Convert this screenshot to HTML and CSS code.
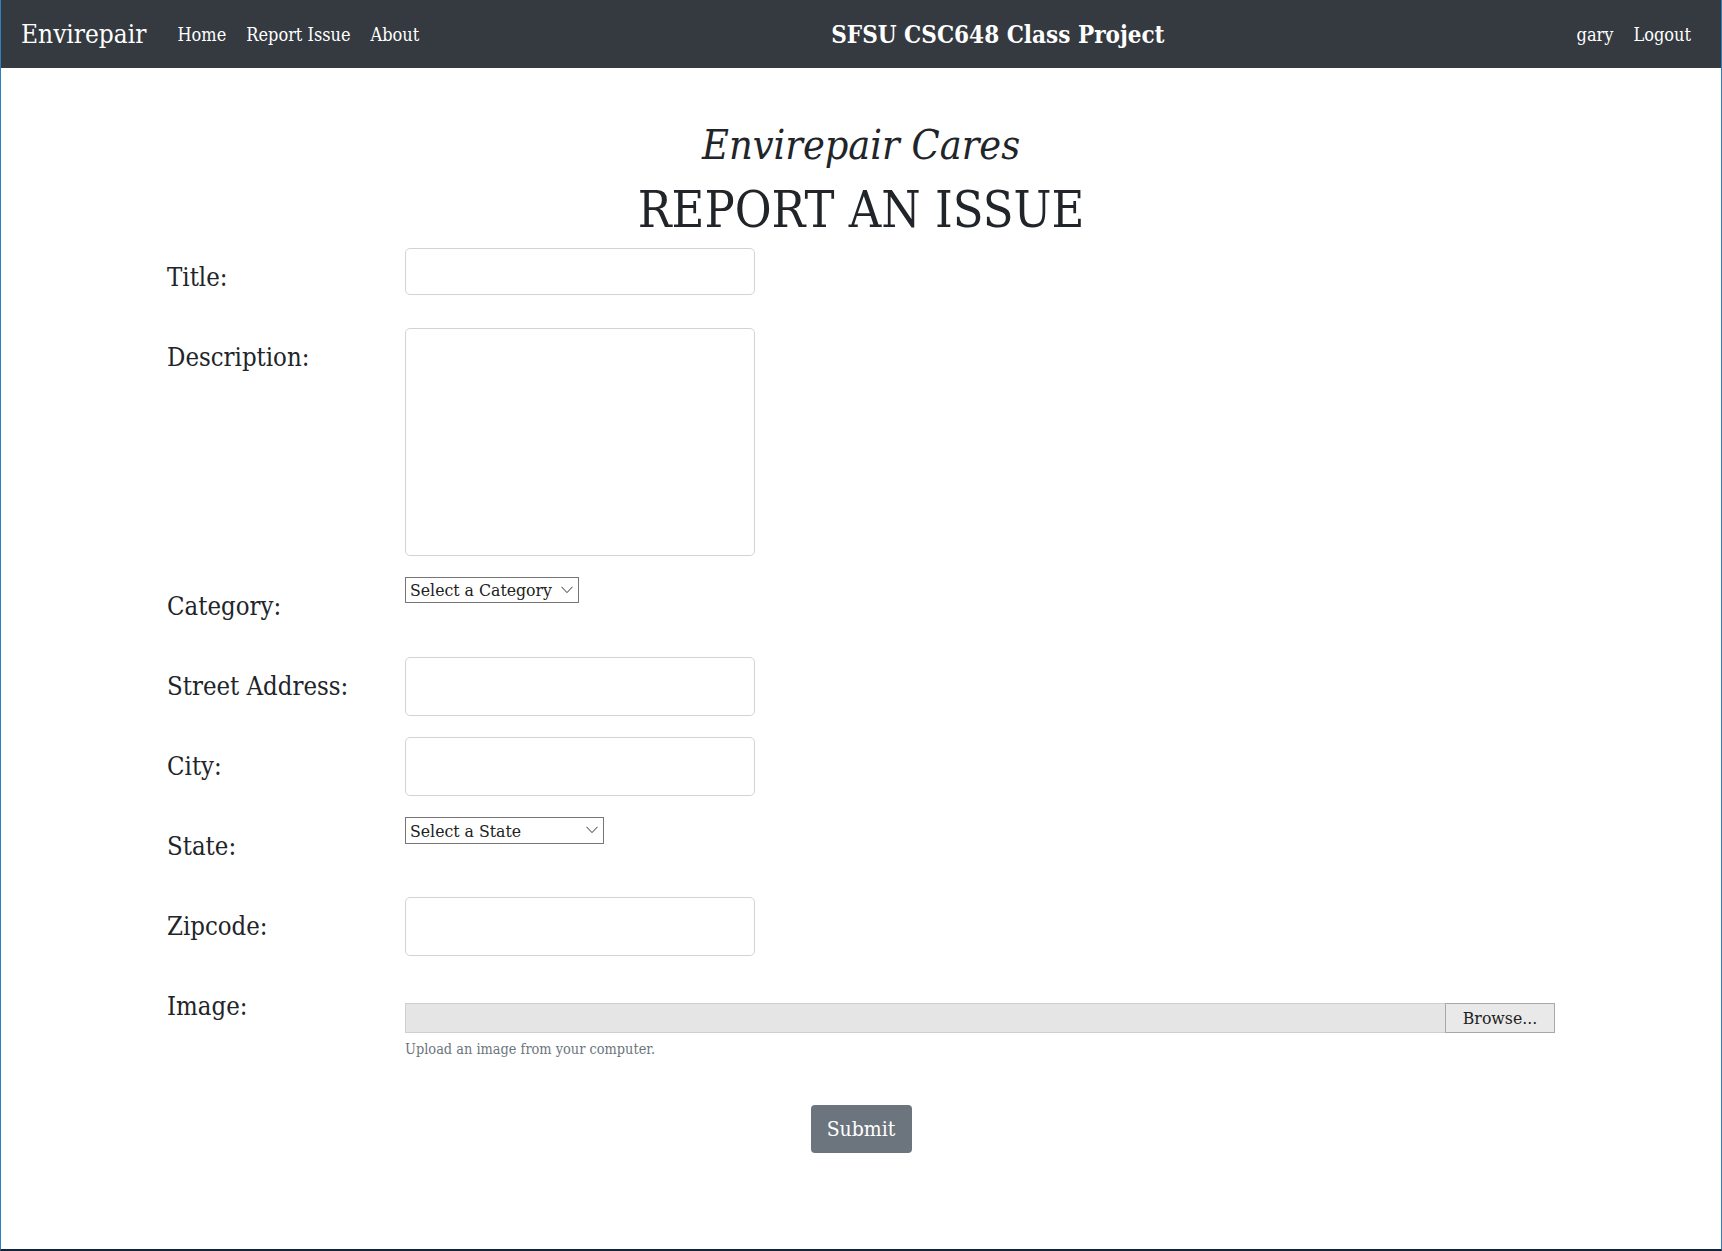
FILE: index.html
```html
<!DOCTYPE html>
<html lang="en">
<head>
<meta charset="utf-8">
<title>Envirepair - Report Issue</title>
<link rel="stylesheet" href="styles.css">
</head>
<body>
<nav class="navbar">
  <div class="nav-left">
    <a class="brand" href="#">Envirepair</a>
    <a class="nav-link" href="#">Home</a>
    <a class="nav-link" href="#">Report Issue</a>
    <a class="nav-link" href="#">About</a>
  </div>
  <div class="nav-title">SFSU CSC648 Class Project</div>
  <div class="nav-right">
    <a class="nav-link" href="#">gary</a>
    <a class="nav-link" href="#">Logout</a>
  </div>
</nav>

<main class="main">
  <h2 class="tagline">Envirepair Cares</h2>
  <h1 class="page-title">REPORT AN ISSUE</h1>

  <form class="report-form">
    <label class="field-label" for="title">Title:</label>
    <div class="field"><input id="title" class="input input-short" type="text"></div>

    <label class="field-label" for="desc">Description:</label>
    <div class="field"><textarea id="desc" class="input textarea"></textarea></div>

    <label class="field-label" for="cat">Category:</label>
    <div class="field">
      <span class="select-wrap select-cat">
        <select id="cat" class="select"><option>Select a Category</option></select>
        <svg class="chev" width="12" height="8" viewBox="0 0 12 8"><path d="M0.5 0.8 L6 6.6 L11.5 0.8" fill="none" stroke="#333" stroke-width="1"/></svg>
      </span>
    </div>

    <label class="field-label" for="street">Street Address:</label>
    <div class="field"><input id="street" class="input" type="text"></div>

    <label class="field-label" for="city">City:</label>
    <div class="field"><input id="city" class="input" type="text"></div>

    <label class="field-label" for="state">State:</label>
    <div class="field">
      <span class="select-wrap select-state">
        <select id="state" class="select"><option>Select a State</option></select>
        <svg class="chev" width="12" height="8" viewBox="0 0 12 8"><path d="M0.5 0.8 L6 6.6 L11.5 0.8" fill="none" stroke="#333" stroke-width="1"/></svg>
      </span>
    </div>

    <label class="field-label" for="zip">Zipcode:</label>
    <div class="field"><input id="zip" class="input" type="text"></div>

    <label class="field-label">Image:</label>
    <div class="field field-image">
      <div class="file-input">
        <div class="file-bar"></div>
        <div class="file-btn">Browse...</div>
      </div>
      <small class="help">Upload an image from your computer.</small>
    </div>

    <div class="submit-row">
      <button type="button" class="btn-submit">Submit</button>
    </div>
  </form>
</main>
</body>
</html>
```

FILE: styles.css
```css
html {
  min-height: 100vh;
  box-sizing: border-box;
  border-left: 1px solid #2f7fc1;
  border-right: 1px solid #2f7fc1;
  border-bottom: 2px solid #13243a;
  background: #fff;
}
body {
  margin: 0;
  font-family: "DejaVu Serif Condensed", "DejaVu Serif", serif;
  font-stretch: condensed;
  color: #212529;
}
.navbar {
  height: 68px;
  background: #343a40;
  display: flex;
  align-items: center;
  justify-content: space-between;
  padding: 0 30px 0 20px;
}
.nav-left, .nav-right {
  display: flex;
  align-items: center;
  gap: 20px;
}
.brand {
  color: #fff;
  text-decoration: none;
  font-size: 26px;
  margin-right: 11px;
}
.nav-link {
  color: #fff;
  text-decoration: none;
  font-size: 18px;
}
.nav-title {
  color: #fff;
  font-weight: bold;
  font-size: 24px;
}
.main {
  padding-top: 52px;
}
.tagline {
  margin: 0;
  text-align: center;
  font-style: italic;
  font-weight: normal;
  font-size: 41px;
  line-height: 50px;
}
.page-title {
  margin: 10px 0 0;
  text-align: center;
  font-weight: normal;
  font-size: 50px;
  line-height: 60px;
}
.report-form {
  max-width: 1388px;
  margin: 8px auto 0;
  display: grid;
  grid-template-columns: 238px 1fr;
  row-gap: 21px;
}
.field-label {
  height: 59px;
  line-height: 59px;
  font-size: 25.5px;
}
.field {
  min-height: 59px;
}
.input {
  display: block;
  box-sizing: border-box;
  width: 350px;
  height: 59px;
  border: 1px solid #ced4da;
  border-radius: 5px;
  background: #fff;
  font: inherit;
  margin: 0;
}
.input-short {
  height: 47px;
}
.textarea {
  height: 228px;
  resize: none;
}
.select-wrap {
  position: relative;
  display: inline-block;
}
.select {
  -webkit-appearance: none;
  appearance: none;
  box-sizing: border-box;
  height: 26px;
  border: 1px solid #767676;
  border-radius: 0;
  background: #fff;
  color: #222;
  font-family: inherit;
  font-stretch: condensed;
  font-size: 17.5px;
  padding: 0 4px;
  margin: 0;
  display: block;
}
.select-cat .select { width: 174px; }
.select-state .select { width: 199px; height: 27px; }
.chev {
  position: absolute;
  right: 6px;
  top: 9px;
  pointer-events: none;
}
.field-image {
  padding-top: 26px;
}
.file-input {
  display: flex;
  height: 30px;
}
.file-bar {
  flex: 1;
  background: #e5e5e5;
  border: 1px solid #cfcfcf;
  border-right: none;
}
.file-btn {
  box-sizing: border-box;
  width: 110px;
  background: #e9e9e9;
  border: 1px solid #a8a8a8;
  font-size: 17.5px;
  line-height: 28px;
  text-align: center;
  color: #222;
}
.help {
  display: block;
  margin-top: 7px;
  font-size: 14.4px;
  line-height: 18px;
  color: #6c757d;
}
.submit-row {
  grid-column: 1 / -1;
  display: flex;
  justify-content: center;
  margin-top: 22px;
}
.btn-submit {
  width: 101px;
  height: 48px;
  background: #6c757d;
  color: #fff;
  border: none;
  border-radius: 4px;
  font-family: inherit;
  font-stretch: condensed;
  font-size: 21px;
}
```
